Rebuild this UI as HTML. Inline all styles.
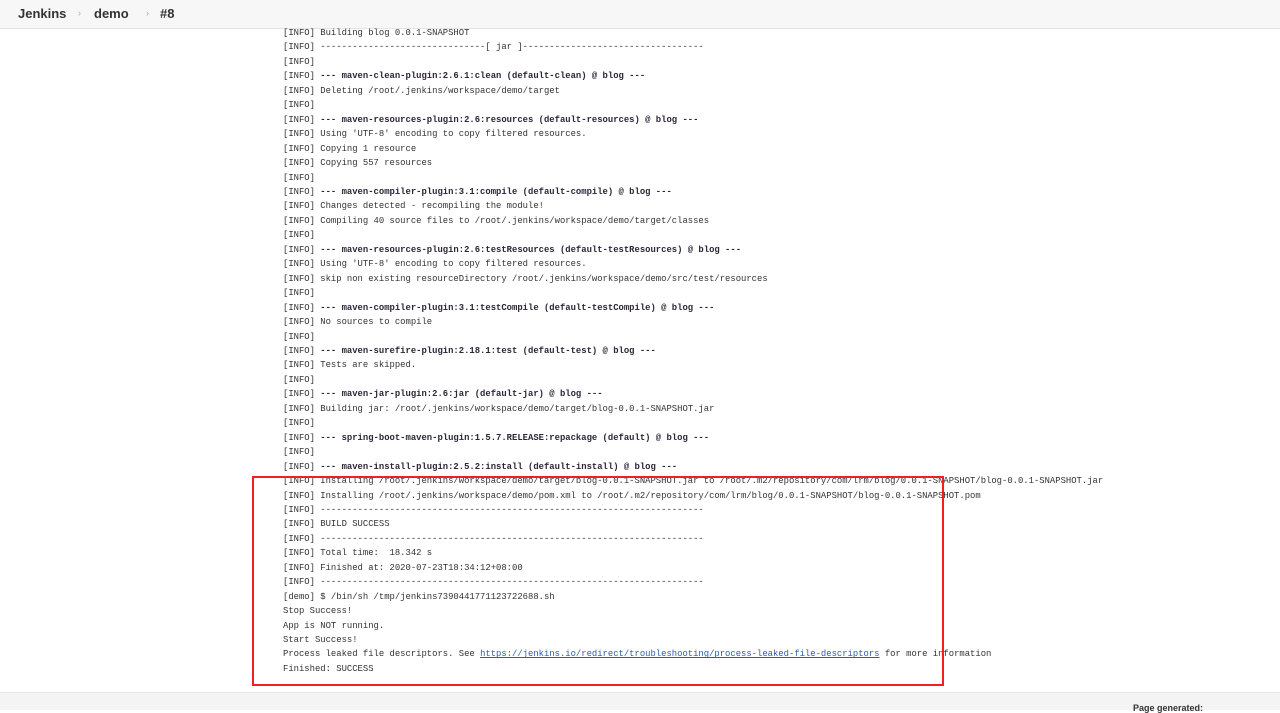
<!DOCTYPE html>
<html><head><meta charset="utf-8"><style>
html,body{margin:0;padding:0;width:1280px;height:709px;overflow:hidden;background:#fff;font-family:"Liberation Sans",sans-serif;}
#hdr{position:absolute;left:0;top:0;width:1280px;height:28px;background:#f7f7f7;border-bottom:1px solid #e4e4e4;}
#hdr span{position:absolute;top:6px;font-size:13px;font-weight:bold;color:#333;}
#hdr i{position:absolute;top:8px;font-style:normal;font-size:9px;color:#aaa;}
pre{position:absolute;left:283px;top:26px;margin:0;font-family:"Liberation Mono","Noto Sans CJK SC",monospace;font-size:8.88px;line-height:14.45px;color:#333;}
b{color:#2e2538;}
a{color:#2a5db0;text-decoration:underline;}
#box{position:absolute;left:252px;top:476px;width:688px;height:206px;border:2px solid #f02020;}
#ftr{position:absolute;left:0;top:692px;width:1280px;height:17px;background:#f4f4f4;border-top:1px solid #e6e6e6;}
#ftr span{position:absolute;left:1133px;top:10px;font-size:9px;font-weight:bold;color:#333;}
</style></head><body>
<div id="hdr"><span style="left:18px">Jenkins</span><i style="left:78px">›</i><span style="left:94px">demo</span><i style="left:146px">›</i><span style="left:160px">#8</span></div>
<pre>[INFO] Building blog 0.0.1-SNAPSHOT
[INFO] -------------------------------[ jar ]----------------------------------
[INFO]
[INFO] <b>--- maven-clean-plugin:2.6.1:clean (default-clean) @ blog ---</b>
[INFO] Deleting /root/.jenkins/workspace/demo/target
[INFO]
[INFO] <b>--- maven-resources-plugin:2.6:resources (default-resources) @ blog ---</b>
[INFO] Using 'UTF-8' encoding to copy filtered resources.
[INFO] Copying 1 resource
[INFO] Copying 557 resources
[INFO]
[INFO] <b>--- maven-compiler-plugin:3.1:compile (default-compile) @ blog ---</b>
[INFO] Changes detected - recompiling the module!
[INFO] Compiling 40 source files to /root/.jenkins/workspace/demo/target/classes
[INFO]
[INFO] <b>--- maven-resources-plugin:2.6:testResources (default-testResources) @ blog ---</b>
[INFO] Using 'UTF-8' encoding to copy filtered resources.
[INFO] skip non existing resourceDirectory /root/.jenkins/workspace/demo/src/test/resources
[INFO]
[INFO] <b>--- maven-compiler-plugin:3.1:testCompile (default-testCompile) @ blog ---</b>
[INFO] No sources to compile
[INFO]
[INFO] <b>--- maven-surefire-plugin:2.18.1:test (default-test) @ blog ---</b>
[INFO] Tests are skipped.
[INFO]
[INFO] <b>--- maven-jar-plugin:2.6:jar (default-jar) @ blog ---</b>
[INFO] Building jar: /root/.jenkins/workspace/demo/target/blog-0.0.1-SNAPSHOT.jar
[INFO]
[INFO] <b>--- spring-boot-maven-plugin:1.5.7.RELEASE:repackage (default) @ blog ---</b>
[INFO]
[INFO] <b>--- maven-install-plugin:2.5.2:install (default-install) @ blog ---</b>
[INFO] Installing /root/.jenkins/workspace/demo/target/blog-0.0.1-SNAPSHOT.jar to /root/.m2/repository/com/lrm/blog/0.0.1-SNAPSHOT/blog-0.0.1-SNAPSHOT.jar
[INFO] Installing /root/.jenkins/workspace/demo/pom.xml to /root/.m2/repository/com/lrm/blog/0.0.1-SNAPSHOT/blog-0.0.1-SNAPSHOT.pom
[INFO] ------------------------------------------------------------------------
[INFO] BUILD SUCCESS
[INFO] ------------------------------------------------------------------------
[INFO] Total time:  18.342 s
[INFO] Finished at: 2020-07-23T18:34:12+08:00
[INFO] ------------------------------------------------------------------------
[demo] $ /bin/sh /tmp/jenkins7390441771123722688.sh
Stop Success!
App is NOT running.
Start Success!
Process leaked file descriptors. See <a>https://jenkins.io/redirect/troubleshooting/process-leaked-file-descriptors</a> for more information
Finished: SUCCESS</pre>
<div id="box"></div>
<div id="ftr"><span>Page generated:</span></div>
</body></html>
